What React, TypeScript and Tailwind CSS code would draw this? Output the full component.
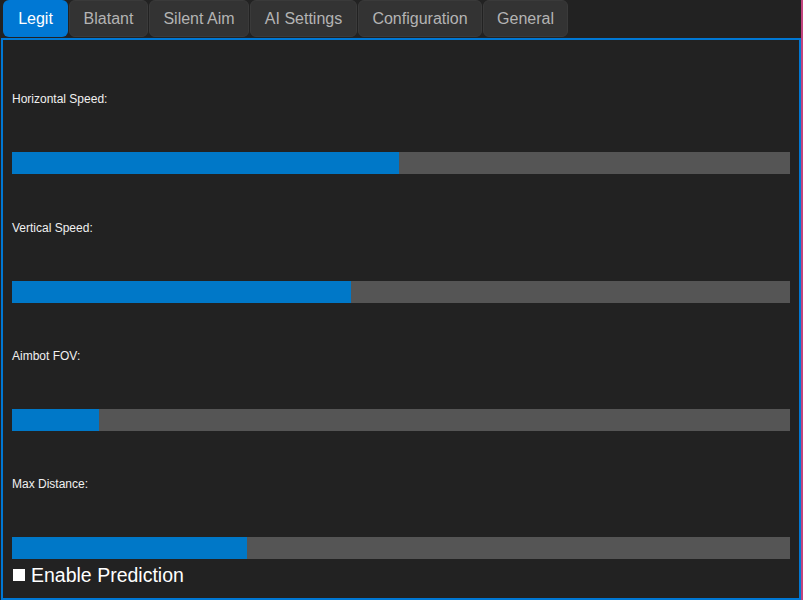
import { useState } from 'react';

const TABS = [
  { name: 'Legit', w: 'w-[65px]' },
  { name: 'Blatant', w: 'w-[79px]' },
  { name: 'Silent Aim', w: 'w-[100px]' },
  { name: 'AI Settings', w: 'w-[107px]' },
  { name: 'Configuration', w: 'w-[124px]' },
  { name: 'General', w: 'w-[85px]' },
];

const SLIDERS = [
  { label: 'Horizontal Speed:', value: 49.7, pad: '' },
  { label: 'Vertical Speed:', value: 43.6, pad: 'pt-[47px]' },
  { label: 'Aimbot FOV:', value: 11.2, pad: 'pt-[46px]' },
  { label: 'Max Distance:', value: 30.2, pad: 'pt-[46px]' },
];

export default function App() {
  const [active, setActive] = useState(0);
  const [prediction, setPrediction] = useState(false);

  return (
    <div className="flex h-[600px] w-[803px] bg-[#222222] font-['Liberation_Sans',Arial,sans-serif]">
      <div className="flex w-[801px] flex-col pl-[1px]">
        <div className="flex h-[38px] gap-[1px] pl-[2px] pb-[1px]">
          {TABS.map((tab, i) => (
            <button
              key={tab.name}
              type="button"
              onClick={() => setActive(i)}
              className={
                i === active
                  ? `${tab.w} rounded-[6px] bg-[#0078d4] text-[16px] text-white`
                  : `${tab.w} rounded-[6px] border border-[#3a3a3a] bg-[#333333] text-[16px] text-[#b4b4b4]`
              }
            >
              {tab.name}
            </button>
          ))}
        </div>
        <div className="flex flex-1 flex-col border-2 border-[#0078d4] bg-[#222222] px-[9px] pt-[52px]">
          {SLIDERS.map((s) => (
            <div key={s.label} className={`flex flex-col ${s.pad}`}>
              <div className="h-[14px] text-[12px] leading-[14px] text-[#f0f0f0]">{s.label}</div>
              <div className="mt-[46px] flex h-[22px] w-[778px] bg-[#555555]">
                <div className="h-full bg-[#0078c8]" style={{ width: `${s.value}%` }} />
              </div>
            </div>
          ))}
          <label className="mt-[4px] flex cursor-pointer items-center gap-[6px] pl-[1px]">
            <span
              onClick={() => setPrediction(!prediction)}
              className={prediction ? 'h-[12px] w-[12px] bg-[#0078d4]' : 'h-[12px] w-[12px] bg-white'}
            />
            <span className="text-[19.5px] leading-[24px] text-white">Enable Prediction</span>
          </label>
        </div>
      </div>
      <div className="h-full w-[2px] bg-[#c2457e]" />
    </div>
  );
}
